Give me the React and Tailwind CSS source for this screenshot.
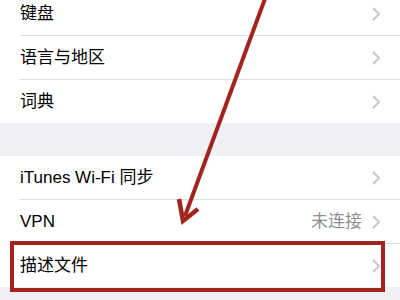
const Chevron = () => (
  <svg width="9" height="14" viewBox="0 0 9 14" className="shrink-0">
    <polyline points="1.5,1.5 7,7 1.5,12.5" fill="none" stroke="#c4c4c9" strokeWidth="1.8" strokeLinecap="round" strokeLinejoin="round" />
  </svg>
);

function Row({ label, detail, last }) {
  return (
    <div className="pl-5">
      <div className="h-[43px] flex items-center pr-[19px]">
        <span className="flex-1 text-[17px] text-black">{label}</span>
        {detail && <span className="text-[17px] text-[#8e8e93] mr-[10px]">{detail}</span>}
        <Chevron />
      </div>
      {!last && <div className="h-px bg-[#dedee2]" />}
    </div>
  );
}

export default function App() {
  return (
    <div
      className="relative w-[400px] h-[300px] overflow-hidden bg-[#efeff4]"
      style={{ fontFamily: '"Liberation Sans", "Noto Sans CJK SC", sans-serif' }}
    >
      <div className="-mt-2 bg-white">
        <Row label="键盘" />
        <Row label="语言与地区" />
        <Row label="词典" last />
      </div>
      <div className="h-[33px]" />
      <div className="bg-white">
        <Row label="iTunes Wi-Fi 同步" />
        <Row label="VPN" detail="未连接" />
        <Row label="描述文件" last />
      </div>

      {/* annotation overlay */}
      <div className="absolute left-[10px] top-[241px] w-[375px] h-[51px] border-[4px] border-[#a3241f]" />
      <svg className="absolute inset-0" width="400" height="300" viewBox="0 0 400 300">
        <line x1="266" y1="-4" x2="185" y2="216" stroke="#a3241f" strokeWidth="4" />
        <polyline points="179,199 183,221 198,209" fill="none" stroke="#a3241f" strokeWidth="4.5" strokeLinejoin="miter" />
      </svg>
    </div>
  );
}
